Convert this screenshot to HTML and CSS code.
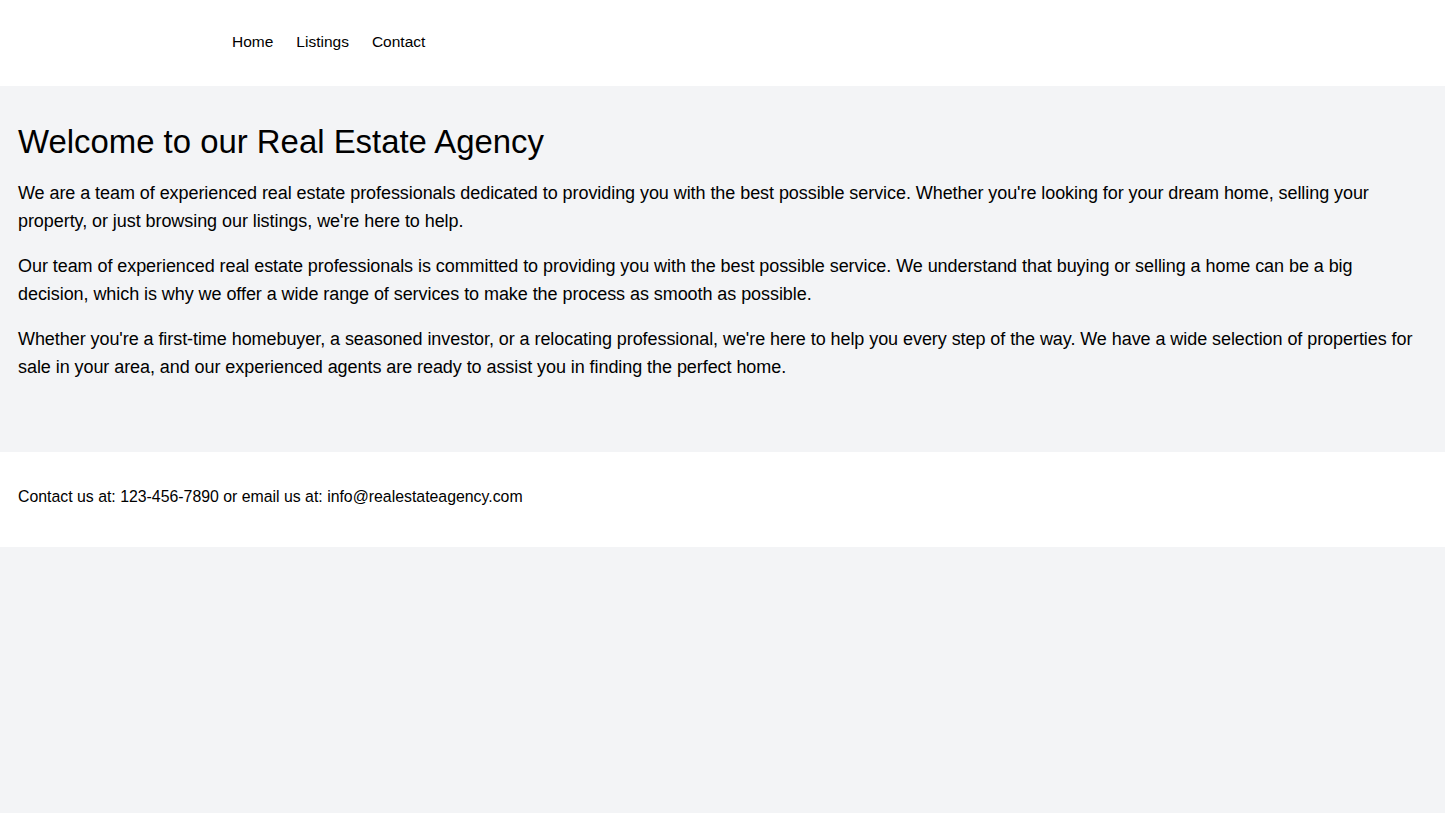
FILE: index.html
```html
<!DOCTYPE html>
<html lang="en">
<head>
<meta charset="utf-8">
<title>Real Estate Agency</title>
<link rel="stylesheet" href="styles.css">
</head>
<body>
<header class="site-header">
  <nav class="nav">
    <a href="#" class="nav-link">Home</a>
    <a href="#" class="nav-link">Listings</a>
    <a href="#" class="nav-link">Contact</a>
  </nav>
</header>
<main class="intro">
  <h1 class="intro-title">Welcome to our Real Estate Agency</h1>
  <p class="intro-text">We are a team of experienced real estate professionals dedicated to providing you with the best possible service. Whether you're looking for your dream home, selling your property, or just browsing our listings, we're here to help.</p>
  <p class="intro-text">Our team of experienced real estate professionals is committed to providing you with the best possible service. We understand that buying or selling a home can be a big decision, which is why we offer a wide range of services to make the process as smooth as possible.</p>
  <p class="intro-text">Whether you're a first-time homebuyer, a seasoned investor, or a relocating professional, we're here to help you every step of the way. We have a wide selection of properties for sale in your area, and our experienced agents are ready to assist you in finding the perfect home.</p>
</main>
<footer class="site-footer">
  <p class="footer-text">Contact us at: 123-456-7890 or email us at: info@realestateagency.com</p>
</footer>
</body>
</html>
```
FILE: styles.css
```css
html, body {
  margin: 0;
  padding: 0;
}
body {
  background: #f3f4f6;
  color: #000;
  font-family: "Liberation Sans", Arial, sans-serif;
  min-height: 813px;
}
.site-header {
  background: #fff;
  padding: 31px 18px 33px 232px;
}
.nav {
  display: flex;
  gap: 23px;
}
.nav-link {
  color: #000;
  text-decoration: none;
  font-size: 15.5px;
  line-height: 22px;
}
.intro {
  padding: 36px 18px 54px;
}
.intro-title {
  margin: 0 0 17px;
  font-size: 32.9px;
  line-height: 40px;
  font-weight: 400;
}
.intro-text {
  margin: 0 0 17px;
  font-size: 18px;
  line-height: 28px;
  letter-spacing: -0.065px;
}
.site-footer {
  background: #fff;
  padding: 32px 18px 38px;
}
.footer-text {
  margin: 0;
  font-size: 15.85px;
  line-height: 25px;
}
```
